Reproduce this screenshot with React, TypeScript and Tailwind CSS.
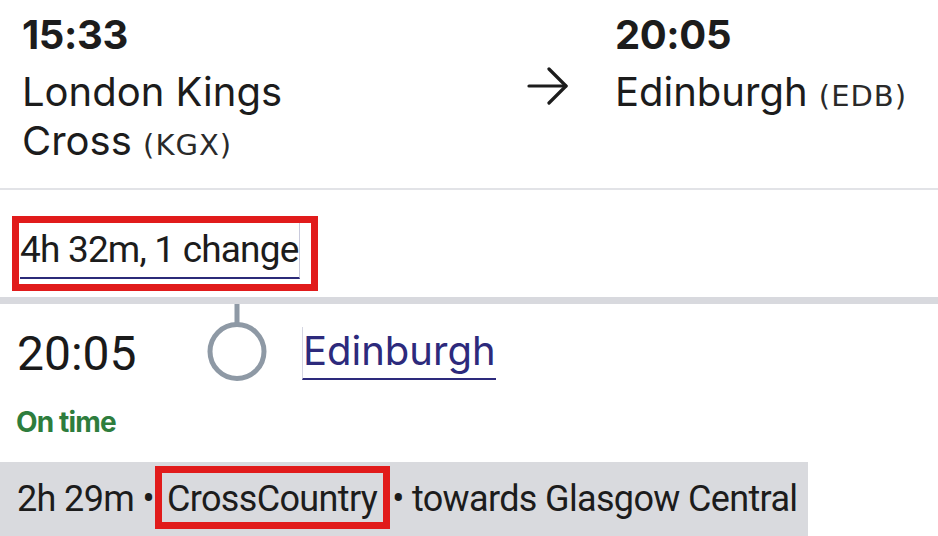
import React from "react";

export default function App() {
  return (
    <div className="relative h-[536px] w-[938px] overflow-hidden bg-white text-[#1c1c1c]" style={{ fontFamily: "Inter, 'Noto Sans', sans-serif" }}>
      {/* Header */}
      <div className="flex h-[188px] pl-[22px] pt-[11px]">
        <div className="w-[505px]">
          <div className="text-[40px] font-bold leading-[48px] tracking-[-0.01em]">15:33</div>
          <div className="mt-[8px] max-w-[320px] text-[40px] leading-[49px]">
            London Kings Cross{" "}
            <span className="font-['DejaVu_Sans',sans-serif] text-[29px] tracking-[1px] text-[#2a2a2a]">(KGX)</span>
          </div>
        </div>
        <div className="w-[88px] pt-[56px]">
          <svg width="42" height="38" viewBox="0 0 42 38" fill="none" stroke="#1c1c1c" strokeWidth="3.2" strokeLinecap="round" strokeLinejoin="round">
            <path d="M2 19 H39" />
            <path d="M22 2 L39 19 L22 36" />
          </svg>
        </div>
        <div>
          <div className="text-[40px] font-bold leading-[48px] tracking-[-0.01em]">20:05</div>
          <div className="mt-[8px] whitespace-nowrap text-[40px] leading-[49px]">
            Edinburgh{" "}
            <span className="font-['DejaVu_Sans',sans-serif] text-[29px] tracking-[1px] text-[#2a2a2a]">(EDB)</span>
          </div>
        </div>
      </div>
      <div className="h-[2px] bg-[#e2e3e7]" />

      {/* Summary */}
      <div className="h-[107px] pl-[12px] pt-[26px]">
        <div className="h-[75px] w-[306px] border-[7px] border-[#e11b1b]">
          <span className="ml-[1px] inline-block border-b-2 border-r border-b-[#2b2a78] border-r-[#c9cadc] pb-[7px] pt-[7px] font-['Roboto',sans-serif] text-[37px] leading-[40px] tracking-[-0.022em] text-[#1c1c1c]">
            4h 32m, 1 change
          </span>
        </div>
      </div>
      <div className="h-[7px] bg-[#d8d9de]" />

      {/* Stop row */}
      <div className="flex items-start">
        <div className="w-[205px] shrink-0 pl-[17px] pt-[22px] font-['Roboto',sans-serif] text-[48px] leading-[56px] text-[#1a1a1a]">20:05</div>
        <svg width="64" height="80" viewBox="0 0 64 80" className="shrink-0">
          <rect x="29.5" y="0" width="5" height="20" fill="#8e99a5" />
          <circle cx="32" cy="47.5" r="27" fill="white" stroke="#8e99a5" strokeWidth="5" />
        </svg>
        <div className="ml-[33px] pt-[23px]">
          <span className="inline-block border-b-2 border-l border-b-[#2d2a7c] border-l-[#d5d6e2] pb-[3px] text-[40px] leading-[48px] text-[#2d2a7c]">
            Edinburgh
          </span>
        </div>
      </div>
      <div className="mt-[22px] pl-[16px] text-[28px] font-bold leading-[32px] tracking-[-0.03em] text-[#2e7d3d]">On time</div>

      {/* Bottom band */}
      <div className="mt-[24px] flex h-[74px] w-[808px] items-baseline whitespace-nowrap bg-[#d9dade] pl-[17px] pt-[4px] font-['Roboto',sans-serif] text-[36px] tracking-[-0.018em] text-[#1c1c1c]">
        <span className="shrink-0 leading-[46px]">2h 29m •</span>
        <span className="ml-[1px] inline-block h-[63px] shrink-0 border-[7px] border-[#e11b1b] pl-[5px] pr-[6px] pt-[3px] leading-[46px]">CrossCountry</span>
        <span className="ml-[2px] shrink-0 leading-[46px]">• towards Glasgow Central</span>
      </div>
    </div>
  );
}
